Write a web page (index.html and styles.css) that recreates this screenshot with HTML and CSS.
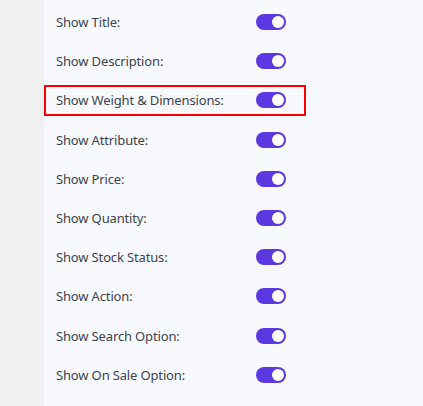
FILE: index.html
```html
<!DOCTYPE html>
<html lang="en">
<head>
<meta charset="UTF-8">
<meta name="viewport" content="width=device-width, initial-scale=1.0">
<title>Display Settings</title>
<link rel="stylesheet" href="styles.css">
</head>
<body>

<div class="page">
    <div class="sidebar"></div>

    <div class="settings">
        <div class="setting-row">
            <span class="label">Show Title:</span>
            <label class="switch"><input type="checkbox" checked><span class="slider"></span></label>
        </div>
        <div class="setting-row">
            <span class="label">Show Description:</span>
            <label class="switch"><input type="checkbox" checked><span class="slider"></span></label>
        </div>
        <div class="setting-row highlight">
            <span class="label">Show Weight &amp; Dimensions:</span>
            <label class="switch"><input type="checkbox" checked><span class="slider"></span></label>
        </div>
        <div class="setting-row">
            <span class="label">Show Attribute:</span>
            <label class="switch"><input type="checkbox" checked><span class="slider"></span></label>
        </div>
        <div class="setting-row">
            <span class="label">Show Price:</span>
            <label class="switch"><input type="checkbox" checked><span class="slider"></span></label>
        </div>
        <div class="setting-row">
            <span class="label">Show Quantity:</span>
            <label class="switch"><input type="checkbox" checked><span class="slider"></span></label>
        </div>
        <div class="setting-row">
            <span class="label">Show Stock Status:</span>
            <label class="switch"><input type="checkbox" checked><span class="slider"></span></label>
        </div>
        <div class="setting-row">
            <span class="label">Show Action:</span>
            <label class="switch"><input type="checkbox" checked><span class="slider"></span></label>
        </div>
        <div class="setting-row">
            <span class="label">Show Search Option:</span>
            <label class="switch"><input type="checkbox" checked><span class="slider"></span></label>
        </div>
        <div class="setting-row">
            <span class="label">Show On Sale Option:</span>
            <label class="switch"><input type="checkbox" checked><span class="slider"></span></label>
        </div>
    </div>
</div>

</body>
</html>
```

FILE: styles.css
```css
body {
    font-family: "Noto Sans", "Open Sans", sans-serif;
    margin: 0;
    padding: 0;
    background: #f0f0f1;
    color: #3c434a;
}

.page {
    display: flex;
    min-height: 406px;
}

.sidebar {
    width: 44px;
    flex-shrink: 0;
    background: #f0f0f1;
}

.settings {
    flex: 1;
    background: #f8f9ff;
    padding: 6.6px 0 0 0;
    display: flex;
    flex-direction: column;
    gap: 8.2px;
}

.setting-row {
    width: 262px;
    height: 31px;
    box-sizing: border-box;
    display: flex;
    justify-content: space-between;
    align-items: center;
    padding: 0 18px 0 10px;
    border: 2px solid transparent;
}

.setting-row.highlight {
    border-color: #ff0000;
}

.label {
    font-size: 13px;
    letter-spacing: -0.15px;
}

.switch {
    position: relative;
    display: inline-block;
    width: 30px;
    height: 16px;
}

.switch input {
    opacity: 0;
    width: 0;
    height: 0;
}

.slider {
    position: absolute;
    top: 0;
    left: 0;
    right: 0;
    bottom: 0;
    background-color: #ccc;
    border-radius: 8px;
    cursor: pointer;
}

.slider:before {
    content: "";
    position: absolute;
    width: 12px;
    height: 12px;
    left: 2px;
    top: 2px;
    background-color: #ffffff;
    border-radius: 50%;
}

.switch input:checked + .slider {
    background-color: #5c38e0;
}

.switch input:checked + .slider:before {
    transform: translateX(14px);
}
```
